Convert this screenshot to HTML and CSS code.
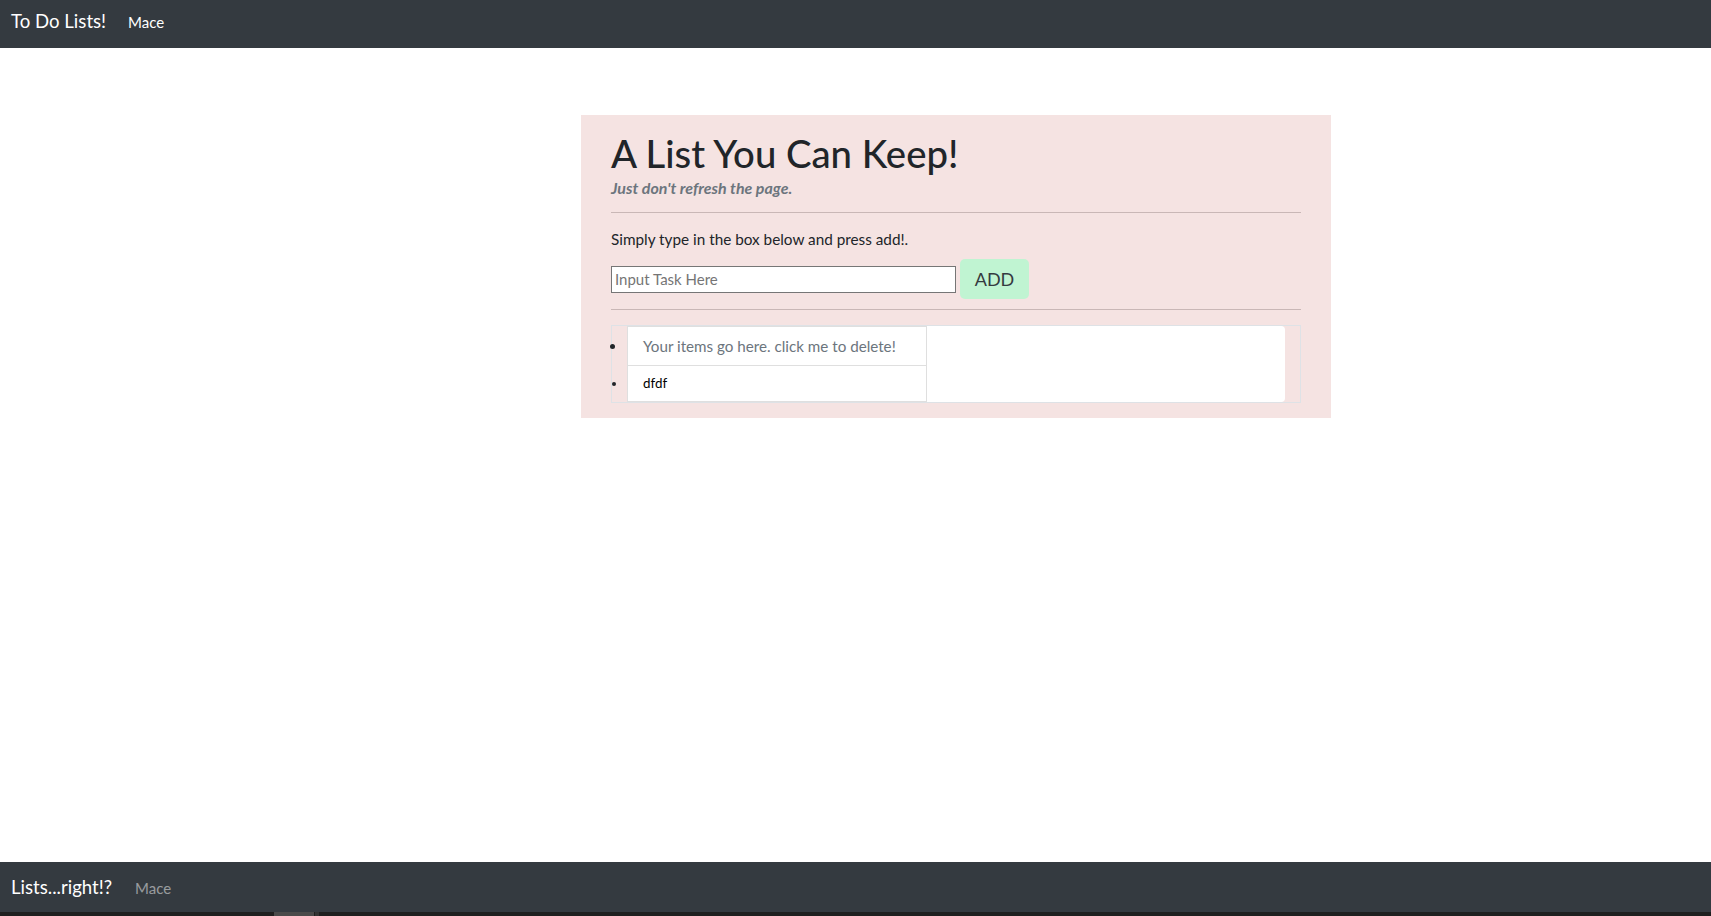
FILE: index.html
```html
<!DOCTYPE html>
<html lang="en">
<head>
<meta charset="utf-8">
<title>To Do Lists!</title>
<link rel="stylesheet" href="styles.css">
</head>
<body>
<nav class="topbar">
  <a class="brand" href="#">To Do Lists!</a>
  <a class="nav-link" href="#">Mace</a>
</nav>
<main class="page">
  <section class="card">
    <h1 class="title">A List You Can Keep!</h1>
    <p class="subtitle">Just don't refresh the page.</p>
    <hr class="rule rule-top">
    <p class="lead-text">Simply type in the box below and press add!.</p>
    <div class="entry">
      <input class="task-input" type="text" placeholder="Input Task Here">
      <button class="add-btn" type="button">ADD</button>
    </div>
    <hr class="rule rule-bottom">
    <div class="list-frame">
      <ul class="task-list">
        <li class="task task-hint">Your items go here. click me to delete!</li>
        <li class="task task-small">dfdf</li>
      </ul>
    </div>
  </section>
</main>
<footer class="footbar">
  <a class="brand" href="#">Lists...right!?</a>
  <a class="nav-link nav-muted" href="#">Mace</a>
</footer>
<div class="scroll-strip"><span class="scroll-thumb"></span><span class="scroll-nub"></span></div>
</body>
</html>
```
FILE: styles.css
```css
* { box-sizing: border-box; }

html, body { height: 100%; }

body {
  margin: 0;
  font-family: Lato, "Liberation Sans", sans-serif;
  color: #212529;
  background: #fff;
  display: flex;
  flex-direction: column;
  min-height: 100vh;
}

a { text-decoration: none; }

.topbar,
.footbar {
  background: #343a40;
  display: flex;
  align-items: baseline;
  padding: 0 11px;
}

.topbar {
  height: 48px;
  padding-top: 6px;
}

.footbar {
  height: 50px;
  padding-top: 10px;
}

.brand {
  color: #fff;
  font-size: 18.6px;
  line-height: 30px;
  margin-right: 22px;
}

.footbar .brand {
  margin-right: 23px;
}

.nav-link {
  color: #fff;
  font-size: 15px;
  line-height: 24px;
}

.nav-muted {
  color: rgba(255, 255, 255, 0.5);
}

.page {
  flex: 1;
  padding: 67px 0 0 581px;
}

.card {
  width: 750px;
  background: #f5e3e2;
  padding: 14px 30px 15px;
}

.title {
  margin: 0;
  font-size: 38.3px;
  line-height: 48px;
  font-weight: 500;
  color: #212529;
}

.subtitle {
  margin: 0;
  font-size: 16px;
  line-height: 22px;
  font-style: italic;
  font-weight: 700;
  color: #6c757d;
}

.rule {
  border: 0;
  border-top: 1px solid #c9b7b6;
  margin: 13px 0 0;
  height: 0;
}

.lead-text {
  margin: 14px 0 0;
  font-size: 15.3px;
  line-height: 24px;
  color: #212529;
}

.entry {
  display: flex;
  align-items: center;
  gap: 4px;
  margin-top: 8px;
}

.task-input {
  width: 345px;
  height: 27px;
  border: 1px solid #767676;
  border-radius: 0;
  padding: 1px 3px;
  font-family: inherit;
  font-size: 15px;
  background: #fff;
}

.task-input::placeholder {
  color: #757575;
}

.add-btn {
  width: 69px;
  height: 40px;
  border: 0;
  border-radius: 5px;
  background: #c0f4d2;
  color: #343a40;
  font-family: inherit;
  font-size: 18px;
  padding: 0;
}

.rule-bottom {
  margin-top: 10px;
}

.list-frame {
  margin-top: 15px;
  border: 1px solid #dee2e6;
  padding: 0 15px;
}

.task-list {
  margin: 0;
  padding: 0;
  background: #fff;
  border-radius: 4px;
  list-style: disc outside;
}

.task {
  width: 300px;
  border: 1px solid #dfdfdf;
  padding: 7px 15px;
  background: #fff;
}

.task::marker {
  color: #212529;
}

.task + .task {
  border-top: 0;
}

.task-hint {
  font-size: 15.2px;
  line-height: 24px;
  color: #6c757d;
}

.task-small {
  font-size: 13.4px;
  line-height: 21px;
  color: #000;
}

.scroll-strip {
  height: 4px;
  background: #1f1f1f;
  display: flex;
  padding-left: 274px;
}

.scroll-thumb {
  width: 40px;
  background: #4a4a4a;
}

.scroll-nub {
  width: 4px;
  margin-left: 1px;
  background: #333;
}
```
